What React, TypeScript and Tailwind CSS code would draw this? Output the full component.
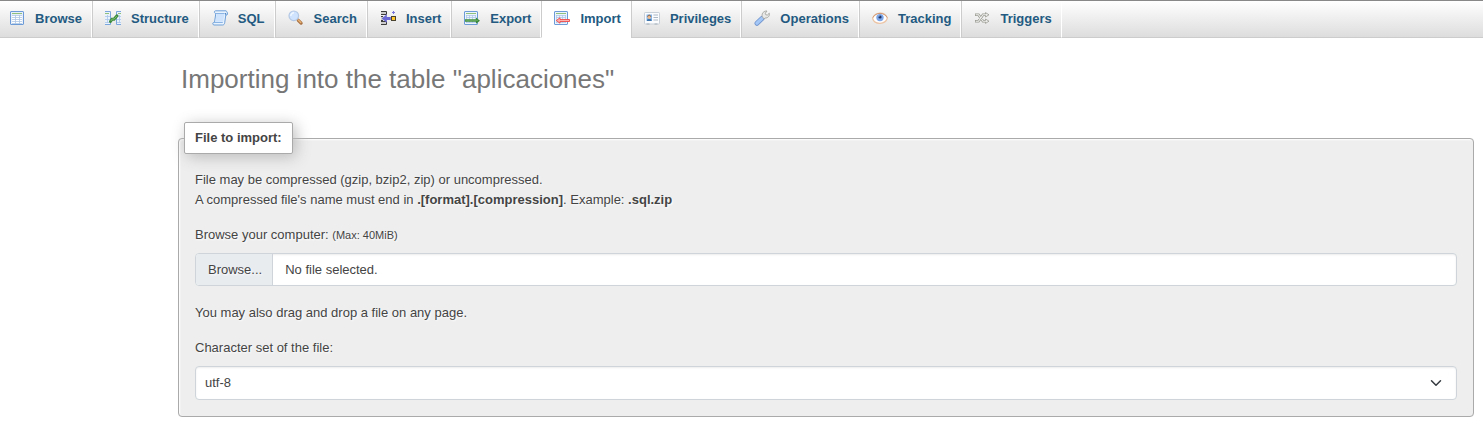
import type { ReactNode } from 'react';

function Icon({ children }: { children: ReactNode }) {
  return (
    <svg viewBox="0 0 16 16" className="mb-[2px] size-4 shrink-0" fill="none" aria-hidden="true">
      {children}
    </svg>
  );
}

function BrowseIcon() {
  return (
    <Icon>
      <rect x="1.5" y="1.5" width="13" height="13" rx=".5" fill="#e6effa" stroke="#6d9bd8" />
      <path d="M3 3.5h10" stroke="#8fc07c" />
      <path d="M3 5h10v8.500H3z" fill="#fff" />
      <path d="M3 5.5h10M3 7.5h10M3 9.5h10M3 11.5h10M3 13.5h10M6.5 5v9M10.5 5v9" stroke="#adc6e5" strokeWidth=".8" />
    </Icon>
  );
}

function StructureIcon() {
  return (
    <Icon>
      <path d="M0 1h5v13H0zM11 1h5v13h-5z" fill="#e9f1fb" />
      <path d="M0 1.5h5.500M0 14.500h5.500V1.500M16 1.500h-4.500v13H16" stroke="#7aa6dd" />
      <path d="M0 3.500h4M13 3.500h3" stroke="#8fc07c" />
      <path d="M0 6.500h5M0 9.500h5M0 12.500h5M2.500 5v8M12 6.500h4M12 9.500h4M12 12.500h4M14.500 5v8" stroke="#a9c5e8" strokeWidth=".8" />
      <path d="M5.500 11.500 7 9.200h2l3-3.400" stroke="#3d8b40" strokeWidth="3" strokeLinecap="round" />
      <path d="M5.800 11 7.300 9h1.900l2.600-3" stroke="#7cc06c" strokeWidth="1" />
    </Icon>
  );
}

function SqlIcon() {
  return (
    <Icon>
      <path d="M3.500 .8c-1.500 0-1.500 2.700.3 2.700L2.500 12.500H1.500c-1 0-1 2.500.5 2.500h8.500c1.500 0 2-1 2.200-2.200L13.800 5H15c.8-1 .5-3.400-1-4.200z" fill="#e8f3fe" stroke="#6d9fd8" />
      <path d="m4.500 4-1 7.800h7.700L12.500 4z" fill="#cfe4fc" />
      <path d="M3.700 3.500h9M2.500 12.500h8.300" stroke="#8ab4e4" />
      <path d="M13.600 4.800V3" stroke="#4d80c0" />
    </Icon>
  );
}

function SearchIcon() {
  return (
    <Icon>
      <path d="m10.300 10.300 2.800 2.800" stroke="#a87042" strokeWidth="3.200" strokeLinecap="round" />
      <path d="m10.300 9.900 2.500 2.500" stroke="#e8b273" strokeWidth="1.400" strokeLinecap="round" />
      <circle cx="5.800" cy="5.800" r="4.800" fill="#cfe3fe" stroke="#b4c8e4" strokeWidth="1.200" />
      <path d="M2.800 6a3.200 3.200 0 0 1 3.200-3.200" stroke="#f0f7ff" strokeWidth="1.500" />
    </Icon>
  );
}

function InsertIcon() {
  return (
    <Icon>
      <path d="M1 1.500h5.500v3H1zM1 11.500h5.500v3H1zM1 6.500h3v4H1z" fill="#ccc" />
      <path d="M1 1.500h5.500v3H1M1 6.500h2M1 10.500h2M1 11.500h5.500v3H1" stroke="#3c3c3c" />
      <path d="m1.800 8.500 5-4.300V7h4v3h-4v2.800z" fill="#6a68d4" />
      <path d="M13.500 1v3M12 2.500h3" stroke="#7876dc" />
      <rect x="11.500" y="6.500" width="4" height="4" fill="#ffc62e" stroke="#4a4230" />
    </Icon>
  );
}

function SheetBase() {
  return (
    <>
      <rect x=".5" y="1.500" width="13" height="13" rx=".5" fill="#edf4fc" stroke="#6d9bd8" />
      <path d="M2 3.500h10" stroke="#8fc07c" />
      <path d="M2 5.500h10M2 7.500h10M2 12.500h10M2.500 5v8M5.500 5v8M8.500 5v8M11.500 5v8" stroke="#adc8ea" strokeWidth=".8" />
    </>
  );
}

function ExportIcon() {
  return (
    <Icon>
      <SheetBase />
      <path d="M1 9.300h11V7.500l4 3.200-4 3v-1.900H1z" fill="#3b8a3c" />
      <path d="M1.500 10.300h12.500" stroke="#76b86c" strokeWidth=".8" />
    </Icon>
  );
}

function ImportIcon() {
  return (
    <Icon>
      <SheetBase />
      <path d="m2.300 10.500 3.700-2.700v1.700h9.500v2H6v1.700z" fill="#ffb3ae" stroke="#ee4a48" strokeWidth=".9" />
    </Icon>
  );
}

function PrivilegesIcon() {
  return (
    <Icon>
      <rect x=".5" y="2.500" width="15" height="11.500" rx=".7" fill="#fafcfd" stroke="#c9d0d8" />
      <path d="M2.500 4.500H8V11H2.500z" fill="#82b6ec" />
      <path d="M3 11v-.8c0-2 4.500-2 4.500 0v.8z" fill="#3f76ac" />
      <circle cx="5.200" cy="7.200" r="1.700" fill="#efb98a" />
      <path d="M3.700 6.700c0-2 3-2 3 0" stroke="#8a5a34" />
      <path d="M9.500 5h4.500M9.500 7.500h4.500M9.500 10h4.500" stroke="#a3b0bd" strokeWidth=".9" />
      <path d="M2.500 14h3M10.500 14h3" stroke="#9ba5b0" strokeWidth=".8" />
    </Icon>
  );
}

function OperationsIcon() {
  return (
    <Icon>
      <path d="M3 13.300 8 8.500" stroke="#7598d0" strokeWidth="5" strokeLinecap="round" />
      <path d="M3 13.200 8 8.400" stroke="#a3c7f6" strokeWidth="3.200" strokeLinecap="round" />
      <path d="M8.200 6.500C7.500 3 10 .8 13 1l-1.700 2.200.4 1.500 1.600.4 2-1.900c.6 3-1.500 5-4.300 4.800L10 9z" fill="#e8e8e6" stroke="#a5a5a2" strokeWidth=".9" />
    </Icon>
  );
}

function TrackingIcon() {
  return (
    <Icon>
      <path d="M.6 8.500C3 1.500 13 1.500 15.400 8c-2 7-12.800 7-14.800.5z" fill="#fff" stroke="#ecc4a6" strokeWidth="1.200" />
      <path d="M.8 7.500C4 2 12 2 15.200 7.500" stroke="#cf9a78" />
      <circle cx="8" cy="7.600" r="3.700" fill="#7ca6e8" />
      <circle cx="8" cy="7" r="1.600" fill="#1e3463" />
      <circle cx="7" cy="6" r=".6" fill="#cfe1ff" />
    </Icon>
  );
}

function TriggersIcon() {
  return (
    <Icon>
      <path d="M1 4.800h3.500l4.500 6.400h3M1 11.200h3.500L9 4.800h3" stroke="#9a9a92" strokeWidth="2.600" />
      <path d="m11.500 2.600 3.500 2.200L11.500 7zM11.500 9l3.500 2.200-3.500 2.200z" fill="#eee" stroke="#9a9a92" strokeWidth=".8" />
      <path d="M1.700 4.800h2.800l4.500 6.400h3.500M1.700 11.200h2.800L9 4.800h3.500" stroke="#efefed" strokeWidth="1.100" />
    </Icon>
  );
}

const tabs = [
  { label: 'Browse', icon: <BrowseIcon /> },
  { label: 'Structure', icon: <StructureIcon /> },
  { label: 'SQL', icon: <SqlIcon /> },
  { label: 'Search', icon: <SearchIcon /> },
  { label: 'Insert', icon: <InsertIcon /> },
  { label: 'Export', icon: <ExportIcon /> },
  { label: 'Import', icon: <ImportIcon />, active: true },
  { label: 'Privileges', icon: <PrivilegesIcon /> },
  { label: 'Operations', icon: <OperationsIcon /> },
  { label: 'Tracking', icon: <TrackingIcon /> },
  { label: 'Triggers', icon: <TriggersIcon /> },
];

export default function App() {
  return (
    <div className="min-h-screen overflow-hidden bg-white font-['Liberation_Sans',Arial,sans-serif] text-[13px] leading-5 text-[#444]">
      <nav className="border-t border-[#888] bg-linear-to-b from-white to-[#dcdcdc]">
        <ul className="flex border-b border-[#ccc]">
          {tabs.map((tab) => (
            <li key={tab.label} className="group -mb-px">
              <a
                href="#"
                aria-current={tab.active ? 'page' : undefined}
                className={`flex h-[37px] items-center gap-[10px] border-r border-b border-l border-r-white border-l-[#ccc] pr-[9px] pl-3 font-bold text-[#235a81] group-first:border-l-0 group-first:pl-[9px] ${
                  tab.active ? 'border-b-white bg-white' : 'border-b-[#ccc]'
                }`}
              >
                {tab.icon}
                {tab.label}
              </a>
            </li>
          ))}
        </ul>
      </nav>

      <main className="pr-[9px] pl-[178px]">
        <h2 className="pt-[25px] pl-[3px] text-[26px] leading-8 text-[#777]">
          Importing into the table "aplicaciones"
        </h2>

        <form>
          <fieldset className="mt-[27px] rounded-sm border border-[#aaa] bg-[#eee] px-4 pb-4 shadow-[inset_1px_1px_2px_#fff] text-shadow-[1px_1px_2px_#fff]">
            <legend className="-ml-[11px] rounded-xs border border-[#aaa] bg-white px-[10px] py-[5px] font-bold shadow-[3px_3px_15px_#bbb]">
              File to import:
            </legend>

            <p className="mt-4">
              File may be compressed (gzip, bzip2, zip) or uncompressed.
              <br />
              A compressed file's name must end in <b>.[format].[compression]</b>. Example: <b>.sql.zip</b>
            </p>

            <label htmlFor="import-file" className="mt-[15px] block">
              Browse your computer: <small className="text-[11px]">(Max: 40MiB)</small>
            </label>
            <label className="mt-2 flex h-[33px] items-stretch overflow-hidden rounded-sm border border-[#ced4da] bg-white shadow-[inset_0_1px_2px_#00000013]">
              <input id="import-file" type="file" className="sr-only" />
              <span className="flex items-center border-r border-[#ced4da] bg-[#e9ecef] pr-[10px] pl-3">Browse...</span>
              <span className="flex items-center px-3">No file selected.</span>
            </label>

            <p className="mt-[17px]">You may also drag and drop a file on any page.</p>

            <label htmlFor="charset" className="mt-[15px] block">
              Character set of the file:
            </label>
            <div className="mt-2 grid items-center">
              <select
                id="charset"
                defaultValue="utf-8"
                className="col-start-1 row-start-1 h-[34px] w-full appearance-none rounded-sm border border-[#ced4da] bg-white px-[9px] shadow-[inset_0_1px_2px_#00000013]"
              >
                <option>utf-8</option>
              </select>
              <svg
                viewBox="0 0 16 16"
                className="pointer-events-none col-start-1 row-start-1 mr-[15px] size-3 justify-self-end"
                fill="none"
                stroke="#343a40"
                strokeWidth="2"
                strokeLinecap="round"
                strokeLinejoin="round"
                aria-hidden="true"
              >
                <path d="m2 5 6 6 6-6" />
              </svg>
            </div>
          </fieldset>
        </form>
      </main>
    </div>
  );
}
